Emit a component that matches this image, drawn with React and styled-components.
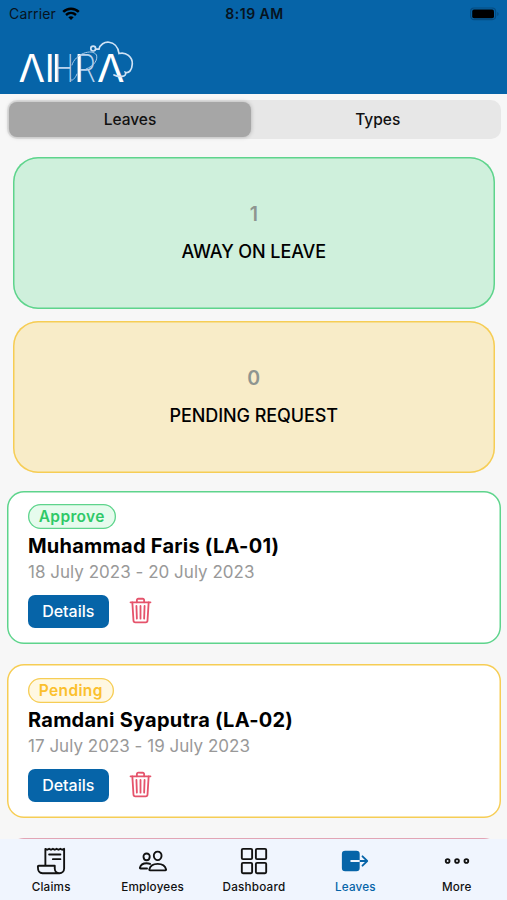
import React, { useState } from 'react';
import styled, { createGlobalStyle, ThemeProvider } from 'styled-components';
import {
  IoReceiptOutline,
  IoPeopleOutline,
  IoGridOutline,
  IoExit,
  IoEllipsisHorizontalOutline,
  IoTrashOutline,
} from 'react-icons/io5';

const theme = {
  colors: {
    primary: '#0664a8',
    success: '#5ed48c',
    successText: '#2fc968',
    warning: '#f6cd55',
    warningText: '#fbc02d',
    danger: '#e2a5b5',
    trash: '#e5536b',
    muted: '#999999',
  },
};

const GlobalStyle = createGlobalStyle`
  * {
    box-sizing: border-box;
  }

  body {
    margin: 0;
    background: #f7f7f7;
    font-family: Inter, "Liberation Sans", sans-serif;
    color: #000;
  }

  button {
    font-family: inherit;
    border: none;
    padding: 0;
    cursor: pointer;
  }
`;

const Screen = styled.div`
  display: flex;
  flex-direction: column;
  width: 507px;
  height: 900px;
  overflow: hidden;
`;

const Header = styled.header`
  flex: none;
  height: 93.5px;
  background: ${({ theme }) => theme.colors.primary};
`;

const StatusBar = styled.div`
  display: grid;
  grid-template-columns: 1fr auto 1fr;
  align-items: center;
  height: 27px;
  padding: 0 7px 0 9px;
  font-size: 14px;
  color: #061320;
`;

const Carrier = styled.div`
  display: flex;
  align-items: center;
  gap: 6px;
  letter-spacing: 0.15px;
`;

const Clock = styled.div`
  font-weight: 600;
  font-size: 14px;
  letter-spacing: 0.5px;
`;

const BatteryIcon = styled.svg`
  justify-self: end;
`;

const Logo = styled.svg`
  display: block;
  margin: 9px 0 0 16px;
  overflow: visible;
`;

const LogoText = styled.text`
  font-family: Inter, sans-serif;
  font-weight: ${({ $weight }) => $weight};
  font-size: 38.5px;
  fill: ${({ $soft }) => ($soft ? '#b9d3ee' : '#fff')};
`;

const Content = styled.main`
  flex: 1;
  min-height: 0;
  display: flex;
  flex-direction: column;
  overflow: hidden;
  padding: 6.5px 6.5px 0 7px;
`;

const Segments = styled.div`
  flex: none;
  display: grid;
  grid-template-columns: 242px 1fr;
  height: 39px;
  padding: 2px 0 2px 2px;
  border-radius: 10px;
  background: #e7e7e7;
`;

const Segment = styled.button`
  padding: 0 0 1px ${({ $active }) => ($active ? 0 : 4)}px;
  border-radius: 8px;
  font-size: 15.5px;
  font-weight: 500;
  color: #111;
  background: ${({ $active }) => ($active ? '#a6a6a6' : 'transparent')};
  box-shadow: ${({ $active }) => ($active ? '0 0 4px rgba(0, 0, 0, 0.25)' : 'none')};
`;

const Summary = styled.div`
  flex: none;
  display: flex;
  flex-direction: column;
  gap: 12.5px;
  padding: 18px 6px 18px;
`;

const SummaryCard = styled.div`
  height: 151.5px;
  padding-top: 45.3px;
  box-shadow: inset 0 0 0 1.5px ${({ theme, $tone }) => theme.colors[$tone]};
  border-radius: 25px;
  background: ${({ $tone }) => ($tone === 'success' ? '#cff0dc' : '#f8ecc8')};
  text-align: center;
`;

const SummaryCount = styled.div`
  font-size: 19.5px;
  line-height: 24px;
  font-weight: 600;
  color: #8e9590;
`;

const SummaryLabel = styled.div`
  margin-top: 13.8px;
  font-size: 18px;
  line-height: 24px;
  font-weight: 500;
  letter-spacing: -0.08px;
`;

const LeaveList = styled.div`
  flex: none;
  display: flex;
  flex-direction: column;
  gap: 20px;
`;

const LeaveCard = styled.article`
  height: 153.8px;
  padding: 13.3px 21px;
  box-shadow: inset 0 0 0 1.5px ${({ theme, $tone }) => theme.colors[$tone]};
  border-radius: 17px;
  background: #fff;
`;

const Badge = styled.div`
  display: flex;
  align-items: center;
  justify-content: center;
  width: ${({ $tone }) => ($tone === 'success' ? 87.5 : 85.5)}px;
  height: 25px;
  box-shadow: inset 0 0 0 1.3px ${({ theme, $tone }) => theme.colors[$tone]};
  border-radius: 13px;
  background: ${({ $tone }) => ($tone === 'success' ? '#e6fbed' : '#fff8e2')};
  color: ${({ theme, $tone }) => theme.colors[`${$tone}Text`]};
  font-size: 15.5px;
  font-weight: 600;
  letter-spacing: 0.35px;
`;

const EmployeeName = styled.h2`
  margin: 5px 0 0;
  font-size: 20px;
  line-height: 24px;
  font-weight: 700;
  letter-spacing: 0.24px;
  white-space: nowrap;
`;

const DateRange = styled.div`
  margin-top: 4px;
  font-size: 17px;
  line-height: 20px;
  letter-spacing: 0.02px;
  color: ${({ theme }) => theme.colors.muted};
`;

const Actions = styled.div`
  display: flex;
  align-items: center;
  gap: 17px;
  margin-top: 13px;
`;

const DetailsButton = styled.button`
  width: 80.5px;
  height: 33px;
  border-radius: 7px;
  background: ${({ theme }) => theme.colors.primary};
  color: #fff;
  font-size: 16px;
  font-weight: 500;
`;

const DeleteButton = styled.button`
  display: flex;
  padding-bottom: 2px;
  background: none;
  color: ${({ theme }) => theme.colors.trash};
  font-size: 29px;
`;

const TabBar = styled.nav`
  flex: none;
  display: grid;
  grid-template-columns: repeat(5, 1fr);
  height: 61.5px;
  background: #f0f5fe;
`;

const Tab = styled.button`
  display: flex;
  flex-direction: column;
  align-items: center;
  gap: 4.5px;
  padding: 7px 0 0 1px;
  background: none;
  color: ${({ theme, $active }) => ($active ? theme.colors.primary : '#111')};

  svg {
    font-size: 30px;
  }
`;

const TabLabel = styled.span`
  font-size: 11.7px;
  line-height: 15px;
  font-weight: 500;
  letter-spacing: 0.2px;
`;

const summaries = [
  { tone: 'success', count: 1, label: 'AWAY ON LEAVE' },
  { tone: 'warning', count: 0, label: 'PENDING REQUEST' },
];

const leaves = [
  { tone: 'success', status: 'Approve', name: 'Muhammad Faris (LA-01)', dates: '18 July 2023 - 20 July 2023' },
  { tone: 'warning', status: 'Pending', name: 'Ramdani Syaputra (LA-02)', dates: '17 July 2023 - 19 July 2023' },
];

const tabs = [
  { label: 'Claims', Icon: IoReceiptOutline },
  { label: 'Employees', Icon: IoPeopleOutline },
  { label: 'Dashboard', Icon: IoGridOutline },
  { label: 'Leaves', Icon: IoExit },
  { label: 'More', Icon: IoEllipsisHorizontalOutline },
];

const Wifi = () => (
  <svg width="18" height="14" viewBox="0 0 18 14" fill="none" stroke="#000">
    <path d="M1.2 4.8C5.5 0.6 12.5 0.6 16.8 4.8" strokeWidth="2.5" />
    <path d="M4 8C7 5.3 11 5.3 14 8" strokeWidth="2.4" />
    <path d="M6.3 10.3C8 8.9 10 8.9 11.7 10.3L9 13Z" fill="#000" stroke="none" />
  </svg>
);

const Battery = () => (
  <BatteryIcon width="31" height="14" viewBox="0 0 31 14">
    <rect x="1.6" y="1" width="25" height="11.6" rx="3.5" fill="none" stroke="#064c80" strokeWidth="1.2" />
    <rect x="3.2" y="2.6" width="21.8" height="8.6" rx="1.8" fill="#000" />
    <path d="M28.3 5C30 5.6 30 8.4 28.3 9Z" fill="#064c80" />
  </BatteryIcon>
);

const BrandLogo = () => (
  <Logo width="120" height="50" viewBox="16 36 120 50">
    <LogoText x="18.6" y="82" textLength="26.5" lengthAdjust="spacingAndGlyphs" $weight={400}>Λ</LogoText>
    <LogoText x="45.4" y="82" textLength="8.5" lengthAdjust="spacingAndGlyphs" $weight={500}>I</LogoText>
    <LogoText x="54.4" y="82" textLength="19" lengthAdjust="spacingAndGlyphs" $weight={200} $soft>H</LogoText>
    <LogoText x="76" y="82" textLength="20" lengthAdjust="spacingAndGlyphs" $weight={200} $soft>R</LogoText>
    <LogoText x="97" y="82" textLength="27.5" lengthAdjust="spacingAndGlyphs" $weight={400}>Λ</LogoText>
    {/* heavy stems */}
    <g stroke="#fff" strokeWidth="2.8">
      <path d="M56.3 54V82" />
      <path d="M79 54V82" />
    </g>
    {/* thin flourishes between the letters */}
    <g fill="none" stroke="#a9caea" strokeWidth="1" strokeLinecap="round">
      <path d="M70.5 78C70.5 83 75 79 77 74" />
      <path d="M72 65C75 54 92 48 96.5 55C98 60 94 66 86 69" />
    </g>
    {/* cloud */}
    <g fill="none" stroke="#cfe2f5" strokeWidth="1.7" strokeLinecap="round">
      <circle cx="93.2" cy="48.6" r="2.4" />
      <path d="M95.8 49.2H99C101 39.5 117 39 119 53.5C126 51.5 132.7 57 132.3 64C132 70 129 73.5 125.4 72.4C127.5 77.5 118 77 114 75" />
    </g>
  </Logo>
);

const App = () => {
  const [segment, setSegment] = useState('Leaves');
  const [tab, setTab] = useState('Leaves');

  return (
    <ThemeProvider theme={theme}>
      <GlobalStyle />
      <Screen>
        <Header>
          <StatusBar>
            <Carrier>
              Carrier
              <Wifi />
            </Carrier>
            <Clock>8:19 AM</Clock>
            <Battery />
          </StatusBar>
          <BrandLogo />
        </Header>

        <Content>
          <Segments>
            {['Leaves', 'Types'].map((name) => (
              <Segment key={name} $active={segment === name} onClick={() => setSegment(name)}>
                {name}
              </Segment>
            ))}
          </Segments>

          <Summary>
            {summaries.map(({ tone, count, label }) => (
              <SummaryCard key={label} $tone={tone}>
                <SummaryCount>{count}</SummaryCount>
                <SummaryLabel>{label}</SummaryLabel>
              </SummaryCard>
            ))}
          </Summary>

          <LeaveList>
            {leaves.map(({ tone, status, name, dates }) => (
              <LeaveCard key={name} $tone={tone}>
                <Badge $tone={tone}>{status}</Badge>
                <EmployeeName>{name}</EmployeeName>
                <DateRange>{dates}</DateRange>
                <Actions>
                  <DetailsButton>Details</DetailsButton>
                  <DeleteButton aria-label="Delete">
                    <IoTrashOutline />
                  </DeleteButton>
                </Actions>
              </LeaveCard>
            ))}
            <LeaveCard $tone="danger" />
          </LeaveList>
        </Content>

        <TabBar>
          {tabs.map(({ label, Icon }) => (
            <Tab key={label} $active={tab === label} onClick={() => setTab(label)}>
              <Icon />
              <TabLabel>{label}</TabLabel>
            </Tab>
          ))}
        </TabBar>
      </Screen>
    </ThemeProvider>
  );
};

export default App;
